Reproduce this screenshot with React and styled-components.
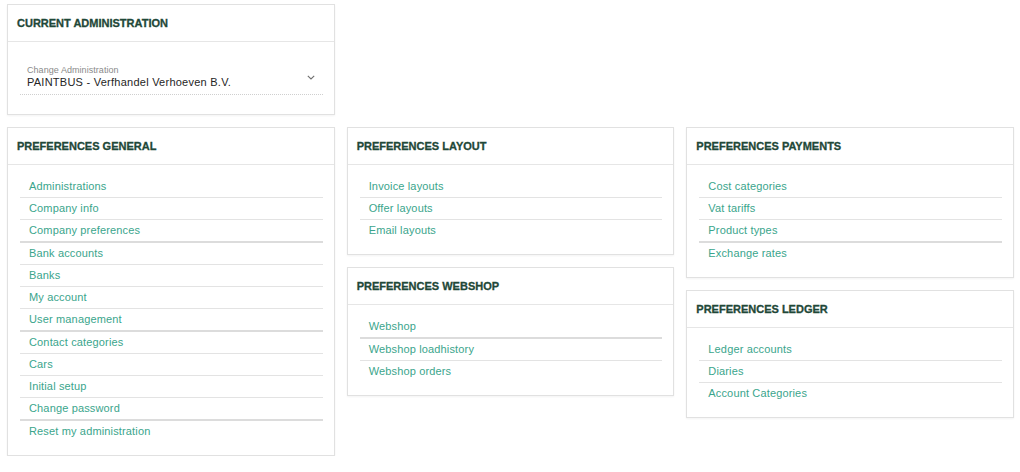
import React from "react"
import styled, { createGlobalStyle } from "styled-components"

const GlobalStyle = createGlobalStyle`
  body {
    margin: 0;
    background: #ffffff;
    font-family: "Liberation Sans", Arial, sans-serif;
  }
`

const sections = {
  general: {
    title: "Preferences General",
    items: [
      { label: "Administrations" },
      { label: "Company info" },
      { label: "Company preferences", groupEnd: true },
      { label: "Bank accounts" },
      { label: "Banks" },
      { label: "My account" },
      { label: "User management", groupEnd: true },
      { label: "Contact categories" },
      { label: "Cars" },
      { label: "Initial setup" },
      { label: "Change password", groupEnd: true },
      { label: "Reset my administration" },
    ],
  },
  layout: {
    title: "Preferences Layout",
    items: [{ label: "Invoice layouts" }, { label: "Offer layouts" }, { label: "Email layouts" }],
  },
  webshop: {
    title: "Preferences Webshop",
    items: [{ label: "Webshop", groupEnd: true }, { label: "Webshop loadhistory" }, { label: "Webshop orders" }],
  },
  payments: {
    title: "Preferences Payments",
    items: [
      { label: "Cost categories" },
      { label: "Vat tariffs" },
      { label: "Product types", groupEnd: true },
      { label: "Exchange rates" },
    ],
  },
  ledger: {
    title: "Preferences Ledger",
    items: [{ label: "Ledger accounts" }, { label: "Diaries" }, { label: "Account Categories" }],
  },
}

const ChevronDown = () => (
  <svg width="8" height="5" viewBox="0 0 8 5" fill="none">
    <path d="M0.8 0.8 L4 4 L7.2 0.8" stroke="#6f6f6f" strokeWidth="1.1" />
  </svg>
)

const PreferenceCard = ({ section }) => (
  <Card>
    <CardHeader>{section.title}</CardHeader>
    <CardBody>
      <LinkList>
        {section.items.map((item) => (
          <LinkItem key={item.label} $groupEnd={item.groupEnd}>
            <Link href="#">{item.label}</Link>
          </LinkItem>
        ))}
      </LinkList>
    </CardBody>
  </Card>
)

export default function App() {
  return (
    <>
      <GlobalStyle />
      <Page>
        <TopRow>
          <Card>
            <CardHeader>Current Administration</CardHeader>
            <CardBody>
              <SelectField>
                <SelectText>
                  <SelectLabel>Change Administration</SelectLabel>
                  <SelectValue>PAINTBUS - Verfhandel Verhoeven B.V.</SelectValue>
                </SelectText>
                <ChevronDown />
              </SelectField>
            </CardBody>
          </Card>
        </TopRow>
        <Columns>
          <Column>
            <PreferenceCard section={sections.general} />
          </Column>
          <Column>
            <PreferenceCard section={sections.layout} />
            <PreferenceCard section={sections.webshop} />
          </Column>
          <Column>
            <PreferenceCard section={sections.payments} />
            <PreferenceCard section={sections.ledger} />
          </Column>
        </Columns>
      </Page>
    </>
  )
}

const Page = styled.div`
  padding: 4px 6px 0 7px;
  display: flex;
  flex-direction: column;
  gap: 12px;
`

const TopRow = styled.div`
  display: grid;
  grid-template-columns: repeat(3, 1fr);
  gap: 12px;
`

const Columns = styled.div`
  display: grid;
  grid-template-columns: repeat(3, 1fr);
  gap: 12px;
  align-items: start;
`

const Column = styled.div`
  display: flex;
  flex-direction: column;
  gap: 12px;
`

const Card = styled.section`
  background: #ffffff;
  border: 1px solid #e1e1e1;
  box-shadow: 0 1px 2px rgba(0, 0, 0, 0.05);
`

const CardHeader = styled.h2`
  margin: 0;
  height: 36px;
  line-height: 36px;
  padding: 0 9px;
  border-bottom: 1px solid #e6e6e6;
  font-family: "Liberation Sans", Arial, sans-serif;
  font-size: 11px;
  font-weight: 700;
  text-transform: uppercase;
  color: #1f4838;
  -webkit-text-stroke: 0.3px #1f4838;
`

const CardBody = styled.div`
  padding: 11px 11px 13px 12px;
`

const SelectField = styled.div`
  display: flex;
  align-items: center;
  justify-content: space-between;
  padding: 12px 8px 5px 7px;
  margin-bottom: 6px;
  border-bottom: 1px dotted #cfcfcf;
`

const SelectText = styled.div`
  display: flex;
  flex-direction: column;
`

const SelectLabel = styled.span`
  font-size: 9px;
  line-height: 11px;
  color: #8a8a8a;
  letter-spacing: 0.05px;
`

const SelectValue = styled.span`
  font-size: 11px;
  line-height: 13px;
  color: #252525;
  letter-spacing: 0.25px;
`

const LinkList = styled.ul`
  list-style: none;
  margin: 0;
  padding: 0;
`

const LinkItem = styled.li`
  height: 21px;
  border-bottom: ${(p) => (p.$groupEnd ? "2px solid #dcdcdc" : "1px solid #e3e3e3")};

  &:last-child {
    border-bottom: none;
  }
`

const Link = styled.a`
  display: block;
  padding-left: 9px;
  line-height: 21px;
  font-size: 11px;
  letter-spacing: 0.15px;
  color: #3aa58c;
  text-decoration: none;
`
